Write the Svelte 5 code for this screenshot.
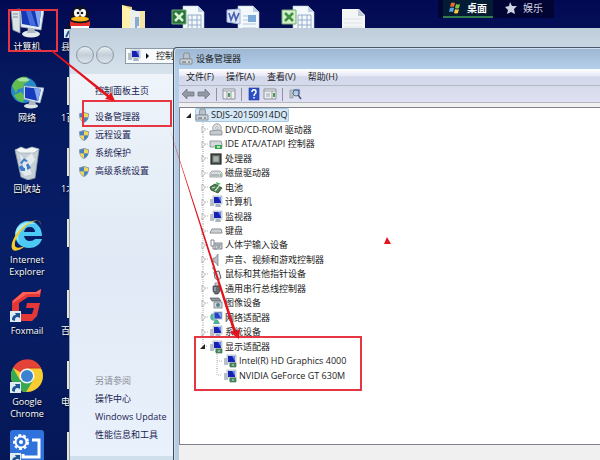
<script>
	const shortcuts = [
		{ icon: 'computer', label: '计算机' },
		{ icon: 'network', label: '网络' },
		{ icon: 'bin', label: '回收站' },
		{ icon: 'ie', label: 'Internet Explorer' },
		{ icon: 'foxmail', label: 'Foxmail' },
		{ icon: 'chrome', label: 'Google Chrome' },
		{ icon: 'tool', label: '' }
	];

	const hiddenFiles = ['县', '1百', '1北', '', '百', '电', ''];

	const files = ['folder', 'excel', 'word', 'sheet', 'blank'];

	const tasks = ['设备管理器', '远程设置', '系统保护', '高级系统设置'];
	const related = ['操作中心', 'Windows Update', '性能信息和工具'];
	const menus = ['文件(F)', '操作(A)', '查看(V)', '帮助(H)'];

	const devices = [
		{ level: 0, icon: 'host', name: 'SDJS-20150914DQ', open: true },
		{ level: 1, icon: 'dvd', name: 'DVD/CD-ROM 驱动器' },
		{ level: 1, icon: 'ide', name: 'IDE ATA/ATAPI 控制器' },
		{ level: 1, icon: 'cpu', name: '处理器' },
		{ level: 1, icon: 'disk', name: '磁盘驱动器' },
		{ level: 1, icon: 'battery', name: '电池' },
		{ level: 1, icon: 'pc', name: '计算机' },
		{ level: 1, icon: 'monitor', name: '监视器' },
		{ level: 1, icon: 'keyboard', name: '键盘' },
		{ level: 1, icon: 'hid', name: '人体学输入设备' },
		{ level: 1, icon: 'sound', name: '声音、视频和游戏控制器' },
		{ level: 1, icon: 'mouse', name: '鼠标和其他指针设备' },
		{ level: 1, icon: 'usb', name: '通用串行总线控制器' },
		{ level: 1, icon: 'camera', name: '图像设备' },
		{ level: 1, icon: 'net', name: '网络适配器' },
		{ level: 1, icon: 'pc', name: '系统设备' },
		{ level: 1, icon: 'display', name: '显示适配器', open: true, last: true },
		{ level: 2, icon: 'display', name: 'Intel(R) HD Graphics 4000' },
		{ level: 2, icon: 'display', name: 'NVIDIA GeForce GT 630M', last: true }
	];
</script>

{#snippet arrowBadge()}
	<rect x="0" y="23" width="11" height="11" fill="#dfeaf5" />
	<path d="M2 32c0-4 2-5 4-5l-1-2h5v5l-2-1c-3 0-3 2-3 4z" fill="#1d5592" />
{/snippet}

{#snippet screen()}
	<rect x="1" y="4" width="4" height="7" fill="#b9c1c9" />
	<rect x="4" y="1" width="9" height="8" fill="#dbe3ec" stroke="#9aa6b5" stroke-width=".6" />
	<rect x="5" y="2" width="7" height="6" fill="#1620b4" />
	<path d="M9 2h3v5z" fill="#6787ee" />
	<path d="M7 9h4l1 3H6z" fill="#a9b3bd" />
{/snippet}

{#snippet deviceIcon(kind)}
	<svg class="device-icon" viewBox="0 0 14 14" aria-hidden="true">
		{#if kind === 'host'}
			<path d="M5 1h5l1 6H4z" fill="#b9c1c9" stroke="#7d8790" stroke-width=".8" />
			<path d="M1 7h12v5H1z" fill="#cfd5da" stroke="#78828b" stroke-width=".8" />
			<path d="M3 10h4M9 10h2" stroke="#536069" />
		{:else if kind === 'dvd'}
			<circle cx="8" cy="5" r="4.3" fill="#dce0e4" stroke="#8d959c" stroke-width=".8" />
			<circle cx="8" cy="5" r="1.3" fill="#fff" stroke="#8d959c" stroke-width=".6" />
			<path d="M1 8l9-1 3 1v4H1z" fill="#c5cace" stroke="#828a90" stroke-width=".8" />
		{:else if kind === 'ide'}
			<path d="M1 4h11l1 3v3H1z" fill="#d3d7da" stroke="#80888d" stroke-width=".8" />
			<path d="M6 8h7v4H6z" fill="#37a653" />
			<path d="M8 9h3v2H8z" fill="#b2e6ac" />
		{:else if kind === 'cpu'}
			<rect x="2" y="2" width="10" height="10" fill="#55605c" stroke="#242a28" stroke-width="1.2" />
			<rect x="4" y="4" width="6" height="6" fill="#a8b1a9" stroke="#6d766f" stroke-width=".6" />
		{:else if kind === 'disk'}
			<path d="M1 7l2-2h8l2 2v4H1z" fill="#d7dbde" stroke="#8e969b" stroke-width=".8" />
			<path d="M2 9h8" stroke="#8b949b" />
			<circle cx="11.5" cy="9" r=".8" fill="#43b34d" />
		{:else if kind === 'battery'}
			<path d="M1 6l5-3 7 4-4 5-7-3z" fill="#527957" stroke="#274c2d" stroke-width=".8" />
			<path d="M3 7l3-1M6 10l4-5" stroke="#c4e4b8" stroke-width="1.3" />
			<path d="M7 1l5 2-4 1" fill="#39a942" />
		{:else if kind === 'pc' || kind === 'monitor'}
			{@render screen()}
		{:else if kind === 'display'}
			{@render screen()}
			<path d="M7 9h6v4H7z" fill="#4b9065" stroke="#32613f" stroke-width=".6" />
			<path d="M9 10h2v2H9z" fill="#8dbb97" />
		{:else if kind === 'keyboard'}
			<path d="M3 5h9l1 4H1z" fill="#e5e7e9" stroke="#747b80" stroke-width=".9" />
			<path d="M3 7h8" stroke="#b0b5b9" />
		{:else if kind === 'hid'}
			<path d="M2 2h3v6H2zM4 8v3h4" fill="none" stroke="#7c858d" />
			<rect x="6" y="5" width="7" height="6" fill="#cdd3d7" stroke="#6d767d" stroke-width=".8" />
			<path d="M7 7h5M8 9h3" stroke="#5d6870" stroke-width=".8" />
		{:else if kind === 'sound'}
			<path d="M4 5h2l3-4v12L6 9H4z" fill="#b6bdc3" stroke="#808990" stroke-width=".8" />
		{:else if kind === 'mouse'}
			<path d="M3 1c2 0 2 3 3 4" fill="none" stroke="#677078" />
			<path d="M5 5l5-1 2 7c-2 2-5 2-6 0z" fill="#e3e6e8" stroke="#565f66" />
		{:else if kind === 'usb'}
			<path d="M6 1h4v3H6z" fill="#ced2d5" stroke="#69737a" stroke-width=".7" />
			<path d="M4 4h7v5l-2 3H6L4 9z" fill="#656b70" stroke="#34393d" stroke-width=".7" />
			<path d="M6 5v4" stroke="#b9bec2" />
		{:else if kind === 'camera'}
			<path d="M1 2h9l2 3H3z" fill="#90989e" stroke="#4f585f" stroke-width=".7" />
			<rect x="5" y="6" width="8" height="6" fill="#d3d8dc" stroke="#606b73" stroke-width=".7" />
			<circle cx="9" cy="9" r="2" fill="#56808f" />
		{:else if kind === 'net'}
			<circle cx="5" cy="6" r="3.8" fill="#53b7a0" />
			<rect x="5" y="1" width="8" height="7" fill="#2343c4" stroke="#b8c3d3" />
			<path d="M9 2h3v5z" fill="#85a3f3" />
			<path d="M6 9h3l2 4H4z" fill="#4fae93" />
		{/if}
	</svg>
{/snippet}

{#snippet desktopIcon(kind)}
	<svg class="desktop-icon" viewBox="0 0 34 34" aria-hidden="true">
		{#if kind === 'computer'}
			<path d="M1 6l9-1v24l-7-3z" fill="#dbe2e4" stroke="#8e9ba7" stroke-width=".8" />
			<path d="M3 10h5M3 13h5" stroke="#7f8e9b" />
			<ellipse cx="21" cy="30" rx="9" ry="3.500" fill="#e4eaec" />
			<path d="M18 24h6l2 5h-9z" fill="#aebbc5" />
			<path d="M10 6h24l-3 20-20-3z" fill="#e5edf2" stroke="#9eb0c4" stroke-width=".7" />
			<path d="M11 7h20l-2 16-17-3z" fill="#1738b4" />
			<path d="M25 7h6l-2 16-1-1z" fill="#80a7ee" />
			<path d="M16 7h5l5 15-6-1z" fill="#456edc" />
		{:else if kind === 'network'}
			<circle cx="14" cy="15" r="13" fill="#2889c8" />
			<path d="M2 11C5 3 12 1 17 2l2 4-5 3-1 4-5 1-2 4zM4 20l7-3 4 4-2 6c-4 0-7-3-9-7z" fill="#63bd4e" />
			<path d="M7 5c3-3 9-3 13 0-5 2-9 2-13 0z" fill="#c8f2ca" opacity=".7" />
			<ellipse cx="21" cy="31" rx="7" ry="2.600" fill="#dce4e7" />
			<path d="M20 25h5l1 5h-8z" fill="#aebbc5" />
			<path d="M14 11l20 2-4 15-16-4z" fill="#e5edf2" stroke="#9eb0c4" stroke-width=".7" />
			<path d="M15 12l16 2-3 12-13-3z" fill="#173bbb" />
			<path d="M24 13l7 1-3 12-1-1z" fill="#80a7ee" />
		{:else if kind === 'bin'}
			<path d="M5 4l24-1-4 29-7 2-7-3z" fill="#c4d0d6" stroke="#8b9aa6" stroke-width=".8" />
			<path d="M5 4l6-3 5 2 6-2 7 2-5 4H10z" fill="#f4f6f5" stroke="#9caab4" stroke-width=".7" />
			<path d="M9 8l6 5 7-6 3 7-6 7 3 7-7 2-5-6 3-6z" fill="#edf2f3" opacity=".75" />
			<path d="M10 17l4-5 4 3-2 1-2-1-2 3zM18 17l3 5-4 2v-3l-1-2zM15 25h-4l-2-4 3-2 2 3h1z" fill="#3d7dc5" />
		{:else if kind === 'ie'}
			<path fill-rule="evenodd" d="M18 4c8 0 14 6 14 15H14c1 4 3 5 6 5 2 0 4-1 5-2h7c-2 6-7 9-13 9C11 31 5 25 5 18S10 4 18 4zm-4 11h11c0-3-2-5-5-5-4 0-5 2-6 5z" fill="#4cc9f4" />
			<path d="M8 10c4-5 12-6 18-3-6-1-12 1-15 6-4 5-3 10-1 13-5-4-6-11-2-16z" fill="#a6ecfc" />
			<path d="M30 11c3-9-6-10-16-2C4 17-1 29 3 33c3 2 9-1 12-4C8 32 4 31 5 26 6 18 20 2 29 4c2 1 2 4 1 7z" fill="#f7cb2b" />
		{:else if kind === 'foxmail'}
			<path d="M31 1l-1 8H18l-9 6v9l3 2h10l2-6h-8l1-5h13l-3 13-5 5H9l-7-6V13L13 4h13z" fill="#e43738" />
			<path d="M31 1l-1 5H17L3 15v-2L13 4h13z" fill="#ff6255" />
		{:else if kind === 'chrome'}
			<circle cx="17" cy="17" r="16" fill="#f8cd31" />
			<path d="M17 17L3 9C10-3 26-2 31 9H17z" fill="#e34437" />
			<path d="M3 9c-6 12 2 23 13 24l8-13-7-3-7 4z" fill="#38a852" />
			<path d="M17 9h14" stroke="#c63a31" />
			<circle cx="17" cy="17" r="7.6" fill="#f3f5f4" />
			<circle cx="17" cy="17" r="6" fill="#3c83cf" />
		{:else if kind === 'tool'}
			<rect width="34" height="34" rx="3" fill="#2f72dc" />
			<path d="M22 10h7v17H13v-3" fill="none" stroke="#fff" stroke-width="3" />
			<circle cx="11" cy="12" r="7" fill="#2f72dc" stroke="#fff" stroke-width="2" stroke-dasharray="3 2" />
			<circle cx="11" cy="12" r="5.5" fill="#2f72dc" stroke="#fff" stroke-width="2" />
			<circle cx="11" cy="12" r="2" fill="#fff" />
		{/if}
		{#if kind === 'foxmail' || kind === 'chrome' || kind === 'tool'}
			{@render arrowBadge()}
		{/if}
	</svg>
{/snippet}

<main class="desktop">
	<div class="column shortcuts">
		{#each shortcuts as item}
			<div class="shortcut">
				{@render desktopIcon(item.icon)}
				<span class="label">{item.label}</span>
			</div>
		{/each}
	</div>

	<div class="column covered">
		{#each hiddenFiles as name, i}
			<div class="shortcut">
				{#if i === 0}
					<svg class="desktop-icon" viewBox="0 0 34 34" aria-hidden="true">
						<path d="M10 15C9-2 29-2 28 15v8H10z" fill="#111318" />
						<ellipse cx="16" cy="9" rx="3" ry="4" fill="#fff" />
						<ellipse cx="22" cy="9" rx="3" ry="4" fill="#fff" />
						<circle cx="17" cy="9" r="1.3" fill="#111" />
						<circle cx="21" cy="9" r="1.3" fill="#111" />
						<ellipse cx="19" cy="15" rx="9" ry="2.500" fill="#f8b71c" />
						<path d="M9 17c6 3 15 3 20 0v5c-4 4-16 4-20 0z" fill="#e42e27" />
						<path d="M10 22h18v8H10z" fill="#fff" />
						<path d="M9 19l-5 6 5-1z" fill="#111318" />
						<rect x="3" y="25" width="10" height="9" fill="#dfeaf5" />
						<path d="M5 33l3-6" stroke="#1d5592" stroke-width="2" />
					</svg>
				{:else}
					<svg class="desktop-icon" viewBox="0 0 34 34" aria-hidden="true">
						<path d="M6 2h6v28H6z" fill="#e8e5cf" />
					</svg>
				{/if}
				<span class="label">{name}</span>
			</div>
		{/each}
	</div>

	<div class="files">
		{#each files as kind}
			<svg class="file" viewBox="0 0 34 34" aria-hidden="true">
				{#if kind === 'folder'}
					<path d="M6 0l10 2v30H6z" fill="#ead27e" />
					<path d="M16 6h13v28H16z" fill="#f5e5a4" />
					<path d="M14 4l10 3v25H14z" fill="#e9f0ee" />
					<path d="M20 12v13M22 12v9" stroke="#6b94bd" stroke-width="1.500" />
					<path d="M6 0l8 4v28H6z" fill="#fff0aa" />
				{:else if kind === 'blank'}
					<path d="M6 4h17l6 6v24H6z" fill="#f4f6f6" />
					<path d="M22 4v7h7z" fill="#bfcbd3" />
					<path d="M8 14h18M8 18h18M8 22h18" stroke="#dde3e6" />
				{:else}
					<path d="M12 1h15l6 6v27H12z" fill="#f3f8fb" stroke="#b6c6d6" stroke-width=".6" />
					<path d="M27 1v6h6z" fill="#bdd0e2" />
					{#if kind === 'word'}
						<path d="M17 11h13M17 15h13M17 19h13M17 23h13" stroke="#b2c6de" />
						<rect x="22" y="10" width="8" height="7" fill="#7ba9da" />
						<path d="M1 5l13-1v15L1 17z" fill="#dfe8f7" stroke="#a3b3db" />
						<path d="M3 8l2 7 3-7 2 7 3-7" fill="none" stroke="#4a62b0" stroke-width="1.700" />
					{:else}
						<path d="M17 10h13v20H17zM17 15h13M17 20h13M21 10v20M26 10v20" fill="none" stroke="#8ca7c4" stroke-width=".9" />
						<path d="M1 5h14v14H1z" fill={kind === 'excel' ? '#28733d' : '#d8edcf'} stroke="#76b072" />
						<path d="M4 8l8 8M12 8l-8 8" stroke={kind === 'excel' ? '#d6f1cd' : '#3f943f'} stroke-width="2.500" />
					{/if}
				{/if}
			</svg>
		{/each}
	</div>

	<nav class="switcher">
		<button class="tab active">
			<svg viewBox="0 0 12 12" aria-hidden="true">
				<path d="M2 1q2-1 4 0L5 5Q3 4 1 5z" fill="#ed6933" />
				<path d="M7 2q2 1 4 0l-1 4q-2 1-4 0z" fill="#84c341" />
				<path d="M1 6q2-1 4 0l-1 4q-2-1-4 0z" fill="#57a6eb" />
				<path d="M6 7q2 1 4 0l-1 4q-2 1-4 0z" fill="#f7ca3c" />
			</svg>
			桌面
		</button>
		<button class="tab">
			<svg viewBox="0 0 12 12" aria-hidden="true">
				<path d="M5 0l2 4 5 0-3 3 1 5-4-2-4 2 1-4-3-3 4-1z" fill="#cdd2e3" />
			</svg>
			娱乐
		</button>
	</nav>

	<section class="window control-panel">
		<header class="nav-bar">
			<button class="round" aria-label="Back"></button>
			<button class="round" aria-label="Forward"></button>
			<div class="address">
				<svg class="device-icon" viewBox="0 0 14 14" aria-hidden="true">{@render screen()}</svg>
				<svg class="crumb" viewBox="0 0 5 8" aria-hidden="true"><path d="M1 1l3 3-3 3z" fill="#111" /></svg>
				<span>控制</span>
			</div>
		</header>
		<aside class="side">
			<a class="side-link plain" href="#home">控制面板主页</a>
			<div class="tasks">
				{#each tasks as task}
					<a class="side-link" href="#task">
						<svg class="shield" viewBox="0 0 10 11" aria-hidden="true">
							<path d="M5 0l5 1.5C10 6 9 9 5 11 1 9 0 6 0 1.5z" fill="#8797aa" />
							<path d="M5 1v4.5H1V2z" fill="#4a80bf" />
							<path d="M5 1l4 1v3.500H5z" fill="#ecd85a" />
							<path d="M1 5.500h4V10C2 8.500 1 7 1 5.500z" fill="#ecd85a" />
							<path d="M9 5.500H5V10c3-1.500 4-3 4-4.500z" fill="#4a80bf" />
						</svg>
						{task}
					</a>
				{/each}
			</div>
			<div class="related">
				<span class="side-link plain muted">另请参阅</span>
				{#each related as item}
					<a class="side-link plain" href="#related">{item}</a>
				{/each}
			</div>
		</aside>
	</section>

	<section class="window device-manager">
		<header class="title">
			{@render deviceIcon('host')}
			<span>设备管理器</span>
		</header>
		<div class="client">
			<nav class="menu">
				{#each menus as item}
					<button>{item}</button>
				{/each}
			</nav>
			<div class="toolbar">
				<button aria-label="Back">
					<svg viewBox="0 0 14 14"><path d="M1 7l5-5v3h7v4H6v3z" fill="#9299a3" stroke="#6e7680" stroke-width=".8" /></svg>
				</button>
				<button aria-label="Forward">
					<svg viewBox="0 0 14 14"><path d="M13 7L8 2v3H1v4h7v3z" fill="#9299a3" stroke="#6e7680" stroke-width=".8" /></svg>
				</button>
				<i class="divider"></i>
				<button aria-label="Show tree">
					<svg viewBox="0 0 14 14"><path d="M1 2h12v10H1z" fill="#eef0f2" stroke="#8c939b" /><path d="M1 4h12M5 4v8M9 4v8" stroke="#9ba1a9" /><path d="M7 6v4" stroke="#4a9a55" stroke-width="2" /></svg>
				</button>
				<i class="divider"></i>
				<button aria-label="Help">
					<svg viewBox="0 0 14 14"><rect x="2" y="1" width="10" height="12" fill="#2b50c8" stroke="#1c3797" stroke-width=".6" /><path d="M5 5c0-3 4-3 4 0 0 2-2 1.500-2 4M7 10v1.500" fill="none" stroke="#fff" stroke-width="1.500" /></svg>
				</button>
				<button aria-label="Properties">
					<svg viewBox="0 0 14 14"><path d="M1 2h12v10H1z" fill="#eef0f2" stroke="#8c939b" /><path d="M1 4h12M9 4v8M3 7h4M3 9h4" stroke="#9ba1a9" /><path d="M11 6v4" stroke="#4a9a55" stroke-width="2" /></svg>
				</button>
				<i class="divider"></i>
				<button aria-label="Scan for hardware changes">
					<svg viewBox="0 0 14 14"><path d="M2 3h3v8H2z" fill="#bdc4ca" stroke="#7d8790" stroke-width=".6" /><rect x="5" y="2" width="7" height="6" fill="#3356b3" stroke="#c5cedb" /><circle cx="8" cy="6" r="3" fill="#d4e6f1" fill-opacity=".8" stroke="#536984" /><path d="M10 8l3 4" stroke="#455b78" stroke-width="1.500" /></svg>
				</button>
			</div>
			<div class="tree-frame">
				<ul class="tree">
					{#each devices as device}
						<li class="row level-{device.level}">
							<svg class="twisty" viewBox="0 0 10 15" aria-hidden="true">
								{#if device.level > 0}
									<path d={device.last ? 'M5 0v7h5' : 'M5 0v15M5 7h5'} fill="none" stroke="#b4b4b4" stroke-dasharray="1 1" />
								{/if}
								{#if device.open}
									<path d="M7 5v5H2z" fill="#222" />
								{:else if device.level === 1}
									<path d="M4 4l3 3.500-3 3.500z" fill="#fff" stroke="#a4a4a4" stroke-width=".8" />
								{/if}
							</svg>
							<span class="node">
								{@render deviceIcon(device.icon)}
								{device.name}
							</span>
						</li>
					{/each}
				</ul>
			</div>
			<footer class="status"></footer>
		</div>
	</section>

	<!-- red callouts drawn over the windows -->
	<svg class="callouts" width="600" height="460" viewBox="0 0 600 460" aria-hidden="true">
		<g fill="none" stroke="#e73643" stroke-width="2">
			<rect x="9" y="10" width="48" height="41" />
			<rect x="83" y="101" width="88" height="25" />
			<rect x="195" y="337" width="166" height="53" />
		</g>
		<g fill="#e3141e">
			<path d="M52 50l57 45 2-3 4 9-10-2 2-2-55-45z" />
			<path d="M169 127l67 204 4-2-1 10-9-7 3-1z" />
			<path d="M387 237l4 7h-7z" />
		</g>
	</svg>
</main>

<style>
	:global(body) {
		margin: 0;
	}

	.desktop {
		position: relative;
		height: 100vh;
		overflow: hidden;
		background: linear-gradient(180deg, #020952 0, #06195e 80px, #071e67 60%, #051757 100%);
		font: 9px/12px "Open Sans", "Noto Sans", "Noto Sans CJK SC", sans-serif;
		color: #1b1b1b;
	}

	button {
		padding: 0;
		border: 0;
		background: none;
		font: inherit;
		color: inherit;
	}

	svg {
		display: block;
		flex: none;
	}

	.column {
		position: absolute;
		top: 4px;
		display: flex;
		flex-direction: column;
	}

	.shortcuts {
		left: 0;
		width: 54px;
	}

	.covered {
		left: 61px;
		width: 40px;
	}

	.shortcut {
		display: flex;
		flex-direction: column;
		align-items: center;
		gap: 3px;
		height: 71px;
		color: #fff;
		text-align: center;
		text-shadow: 0 1px 2px #000;
	}

	.covered .shortcut {
		align-items: flex-start;
	}

	.desktop-icon {
		width: 34px;
		height: 34px;
	}

	.files {
		position: absolute;
		top: 5px;
		left: 116px;
		display: flex;
		gap: 21px;
	}

	.file {
		width: 34px;
		height: 34px;
	}

	.switcher {
		position: absolute;
		top: 0;
		right: 46px;
		display: flex;
		gap: 6px;
		padding: 0 5px;
		background: #020433;
	}

	.tab {
		display: flex;
		align-items: center;
		gap: 6px;
		height: 18px;
		padding: 0 6px;
		border-bottom: 2px solid transparent;
		color: #d2d5e2;
		font-size: 10px;
	}

	.tab.active {
		border-color: #2f7d4d;
		background: #041c33;
		color: #fff;
		font-weight: 700;
	}

	.tab svg {
		width: 12px;
		height: 12px;
	}

	.window {
		position: absolute;
		right: 0;
		bottom: 0;
		display: flex;
		flex-direction: column;
		box-sizing: border-box;
		border-top-left-radius: 4px;
		overflow: hidden;
	}

	.control-panel {
		top: 28px;
		left: 69px;
		padding-bottom: 4px;
		border-left: 1px solid #8fa3b5;
		background: linear-gradient(180deg, #bfcddb 0, #d8e4ed 48px, #cfdfeb 100%);
	}

	.nav-bar {
		display: flex;
		align-items: flex-end;
		gap: 2px;
		height: 42px;
		padding: 0 0 6px 6px;
		box-sizing: border-box;
	}

	.round {
		width: 18px;
		height: 18px;
		border: 1px solid #8b98a5;
		border-radius: 50%;
		background: linear-gradient(180deg, #eaf0f4 0, #c3ced8 50%, #dbe5ec 100%);
	}

	.address {
		display: flex;
		flex: 1;
		align-items: center;
		gap: 4px;
		height: 16px;
		margin-left: 9px;
		padding-left: 1px;
		border: 1px solid #8d9aa8;
		background: #f8fbfd;
		box-sizing: border-box;
	}

	.address span {
		padding-left: 2px;
	}

	.crumb {
		width: 5px;
		height: 8px;
	}

	.side {
		display: flex;
		flex: 1;
		flex-direction: column;
		margin-top: 4px;
		padding: 8px 0 12px;
		background: linear-gradient(180deg, #eef4f9 0, #e0e9f5 50%, #e9f1fc 100%);
	}

	.tasks {
		margin-top: 8px;
	}

	.related {
		margin-top: auto;
	}

	.side-link {
		display: flex;
		align-items: center;
		gap: 6px;
		height: 18px;
		padding-left: 9px;
		color: #1b2452;
		text-decoration: none;
	}

	.side-link.plain {
		padding-left: 25px;
	}

	.side-link.muted {
		color: #8a8f96;
	}

	.shield {
		width: 10px;
		height: 11px;
	}

	.device-manager {
		top: 47px;
		left: 173px;
		padding-left: 5px;
		border-top: 1px solid #49586a;
		border-left: 1px solid #3a4858;
		background: linear-gradient(180deg, #9db6d2 0, #b3cee9 20px, #b8cbe0 100%);
		box-shadow: inset 1px 1px #cfdeec;
	}

	.title {
		display: flex;
		align-items: center;
		gap: 3px;
		height: 21px;
	}

	.client {
		display: flex;
		flex: 1;
		flex-direction: column;
		background: #f0f0f0;
	}

	.menu {
		display: flex;
		gap: 12px;
		height: 16px;
		padding-left: 7px;
		border-bottom: 1px solid #b4b9c6;
		background: linear-gradient(180deg, #fff 0, #e9eaf7 40%, #d3d8ea 50%, #d5daec 100%);
	}

	.toolbar {
		display: flex;
		align-items: center;
		gap: 2px;
		height: 16px;
		padding-left: 2px;
		border-bottom: 1px solid #b4b4bc;
		background: linear-gradient(180deg, #d6dbea, #e0e0f4);
	}

	.toolbar svg {
		width: 14px;
		height: 14px;
	}

	.divider {
		width: 1px;
		height: 13px;
		margin: 0 3px;
		background: #8e939f;
	}

	.tree-frame {
		flex: 1;
		margin-top: 4px;
		border: 1px solid #7d828c;
		border-right: 0;
		background: #fff;
	}

	.tree {
		display: grid;
		grid-auto-rows: 1fr;
		height: 275px;
		margin: 0;
		padding: 0 0 0 4px;
		list-style: none;
	}

	.row {
		display: flex;
		align-items: center;
		gap: 1px;
		min-height: 0;
	}

	.level-1 {
		padding-left: 14px;
	}

	.level-2 {
		padding-left: 28px;
	}

	.twisty {
		width: 10px;
		height: 15px;
	}

	.node {
		display: flex;
		align-items: center;
		gap: 2px;
		height: 14px;
		white-space: nowrap;
	}

	.level-0 .node {
		padding-right: 2px;
		border-radius: 2px;
		background: #d5e8f8;
		box-shadow: 0 0 0 1px #a9c9e3 inset;
	}

	.device-icon {
		width: 14px;
		height: 14px;
	}

	.status {
		height: 15px;
	}

	.callouts {
		position: absolute;
		top: 0;
		left: 0;
		pointer-events: none;
	}
</style>
